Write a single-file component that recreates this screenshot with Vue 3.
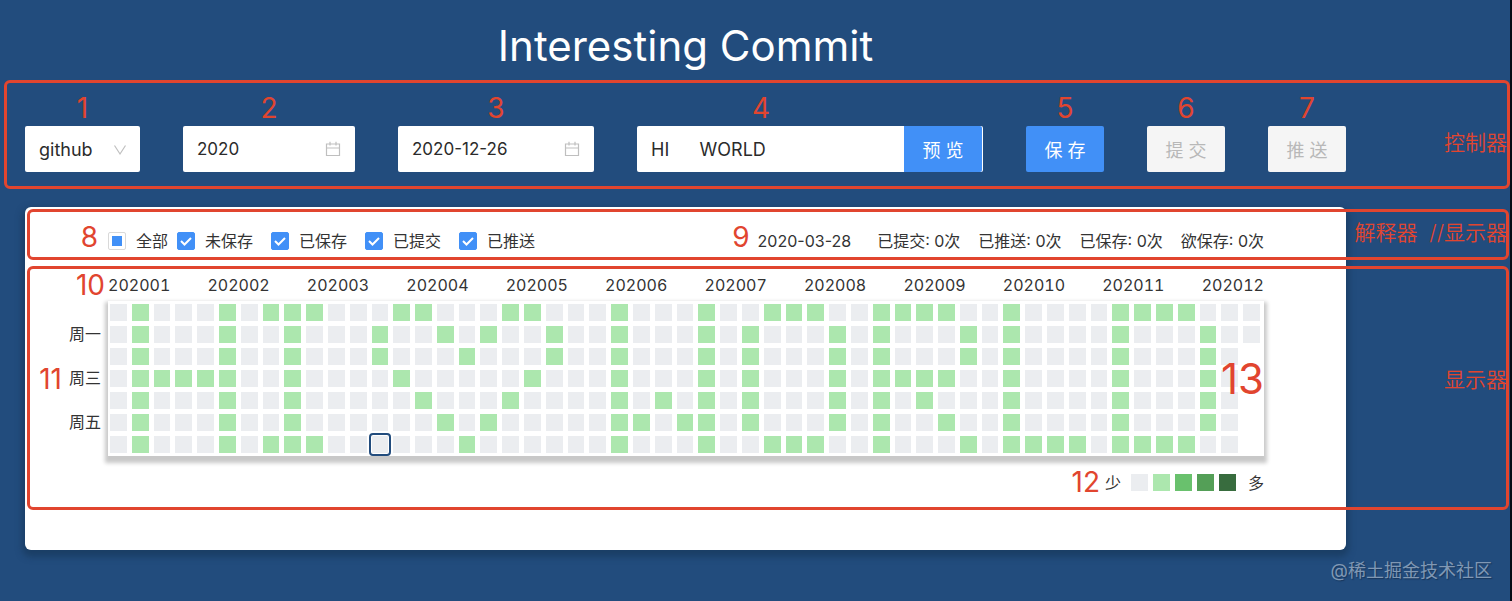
<script setup>
import { ref } from 'vue'

const platform = ref('github')
const year = ref('2020')
const date = ref('2020-12-26')
const text = ref('HI      WORLD')

const filters = ref([
  { id: 'unsaved', label: '未保存', on: true },
  { id: 'saved', label: '已保存', on: true },
  { id: 'committed', label: '已提交', on: true },
  { id: 'pushed', label: '已推送', on: true },
])

const stats = ['已提交: 0次', '已推送: 0次', '已保存: 0次', '欲保存: 0次']
const months = Array.from({ length: 12 }, (_, i) => String(202001 + i))
const weekdays = ['', '周一', '', '周三', '', '周五', '']

const filled = [
  [1, 5, 7, 8, 9, 13, 14, 18, 19, 23, 27, 30, 31, 32, 35, 36, 37, 38, 41, 46, 47, 48, 49],
  [1, 5, 8, 12, 15, 17, 20, 23, 27, 29, 33, 35, 39, 41, 46, 50],
  [1, 5, 8, 12, 16, 20, 23, 27, 29, 33, 35, 39, 41, 46, 50],
  [1, 2, 3, 4, 5, 8, 13, 19, 23, 27, 29, 33, 35, 36, 37, 38, 41, 46, 50],
  [1, 5, 8, 14, 18, 23, 25, 27, 29, 33, 35, 37, 41, 46, 50],
  [1, 5, 8, 15, 17, 23, 24, 26, 27, 29, 33, 35, 38, 41, 46, 50],
  [1, 5, 7, 8, 9, 16, 23, 27, 30, 31, 32, 35, 39, 41, 42, 43, 44, 46, 47, 48, 49],
]

const cells = filled.flatMap((cols, row) =>
  Array.from({ length: 53 }, (_, col) => ({
    key: `${row}-${col}`,
    on: cols.includes(col),
    empty: col === 52 && row > 1,
    selected: row === 6 && col === 12,
  })),
)
</script>

<template>
  <main class="page">
    <h1 class="title">Interesting Commit</h1>

    <section class="controls">
      <span class="frame"></span>
      <div class="control w-platform">
        <label class="mark" for="platform">1</label>
        <div class="box">
          <select id="platform" v-model="platform" class="field">
            <option>github</option>
            <option>gitlab</option>
          </select>
          <svg class="icon chevron" viewBox="0 0 14 14" fill="none" stroke="#bfbfbf" stroke-width="1.2">
            <path d="M1.5 2.5 7 11l5.5-8.5" />
          </svg>
        </div>
      </div>
      <div class="control w-year">
        <label class="mark" for="year">2</label>
        <div class="box">
          <input id="year" v-model="year" class="field date" type="text" />
          <svg class="icon" viewBox="0 0 16 16" fill="none" stroke="#bfbfbf" stroke-width="1.2">
            <path d="M1.5 3h13v11.5h-13zM1.5 7h13M5 .8v3.7M11 .8v3.7" />
          </svg>
        </div>
      </div>
      <div class="control w-date">
        <label class="mark" for="date">3</label>
        <div class="box">
          <input id="date" v-model="date" class="field date" type="text" />
          <svg class="icon" viewBox="0 0 16 16" fill="none" stroke="#bfbfbf" stroke-width="1.2">
            <path d="M1.5 3h13v11.5h-13zM1.5 7h13M5 .8v3.7M11 .8v3.7" />
          </svg>
        </div>
      </div>
      <div class="control w-text">
        <label class="mark" for="text">4</label>
        <div class="box">
          <input id="text" v-model="text" class="field" type="text" />
          <button class="btn primary" type="button">预 览</button>
        </div>
      </div>
      <div class="control">
        <span class="mark">5</span>
        <button class="btn primary" type="button">保 存</button>
      </div>
      <div class="control">
        <span class="mark">6</span>
        <button class="btn" type="button" disabled>提 交</button>
      </div>
      <div class="control">
        <span class="mark">7</span>
        <button class="btn" type="button" disabled>推 送</button>
      </div>
      <span class="note">控制器</span>
    </section>

    <div class="card">
      <section class="summary">
        <span class="frame"></span>
        <span class="mark gutter">8</span>
        <div class="filters">
          <label class="check first">
            <input type="checkbox" :indeterminate="true" />
            <svg class="tick" viewBox="0 0 18 18"><rect x="4" y="4" width="10" height="10" fill="#4190f7" /></svg>
            全部
          </label>
          <label v-for="f in filters" :key="f.id" class="check">
            <input v-model="f.on" type="checkbox" />
            <svg v-if="f.on" class="tick" viewBox="0 0 18 18" fill="none" stroke="#fff" stroke-width="2">
              <path d="M4 9l3.5 3.5L14 6" />
            </svg>
            {{ f.label }}
          </label>
        </div>
        <div class="stats">
          <span class="mark">9</span>
          <span class="day">2020-03-28</span>
          <span v-for="s in stats" :key="s">{{ s }}</span>
        </div>
        <span class="note">解释器&nbsp; //显示器</span>
      </section>

      <section class="calendar">
        <span class="frame"></span>
        <span class="mark gutter">10</span>
        <div class="months">
          <span v-for="m in months" :key="m">{{ m }}</span>
        </div>
        <div class="side">
          <span class="mark">11</span>
          <div class="weekdays">
            <span v-for="(d, i) in weekdays" :key="i">{{ d }}</span>
          </div>
        </div>
        <div class="board">
          <i
            v-for="c in cells"
            :key="c.key"
            class="cell"
            :class="{ on: c.on, empty: c.empty, selected: c.selected }"
          ></i>
          <span class="mark big">13</span>
        </div>
        <div class="legend">
          <span class="mark">12</span>
          <span class="less">少</span>
          <i class="cell l0"></i>
          <i class="cell l1"></i>
          <i class="cell l2"></i>
          <i class="cell l3"></i>
          <i class="cell l4"></i>
          <span class="more">多</span>
        </div>
        <span class="note">显示器</span>
      </section>
    </div>

    <footer class="credit">@稀土掘金技术社区</footer>
  </main>
</template>

<style>
body {
  margin: 0;
  background: #224c7d;
}
</style>

<style scoped>
.page {
  --red: #e1452f;
  --blue: #4190f7;
  position: relative;
  box-sizing: border-box;
  min-height: 100vh;
  padding: 0 164px 0 25px;
  border-right: 2px solid #060d16;
  background: #224c7d;
  color: #333;
  font-family: Inter, "Noto Sans CJK SC", sans-serif;
  font-size: 16px;
  overflow: hidden;
}
.title {
  margin: 0;
  padding: 12px 0 0;
  color: #fff;
  font-size: 42px;
  font-weight: 400;
  line-height: 68px;
  text-align: center;
}
.frame {
  position: absolute;
  inset: 0 -163px 0 2px;
  border: 3px solid var(--red);
  border-radius: 6px;
  pointer-events: none;
}
.mark {
  color: var(--red);
  font-size: 28px;
  font-weight: 400;
  line-height: 32px;
}
.note {
  position: absolute;
  right: -161px;
  color: var(--red);
  font-size: 21px;
  font-weight: 350;
  line-height: 32px;
  white-space: nowrap;
}
.controls {
  position: relative;
  display: flex;
  gap: 43px;
  padding: 12px 0 17px;
  margin-bottom: 18px;
}
.controls .frame {
  left: -21px;
  right: -164px;
}
.controls .note {
  top: 47px;
}
.control {
  display: flex;
  flex: none;
  flex-direction: column;
  align-items: center;
  gap: 2px;
}
.w-platform { width: 115px; }
.w-year { width: 172px; }
.w-date { width: 196px; }
.w-text {
  flex: 1;
  min-width: 0;
}
.w-text .mark { margin-right: 98px; }
.box {
  position: relative;
  display: flex;
  box-sizing: border-box;
  width: 100%;
  height: 46px;
  border-radius: 2px;
  background: #fff;
}
.w-text .box {
  padding-right: 1px;
}
.w-text .btn {
  border-radius: 0 2px 2px 0;
}
.field {
  flex: 1;
  min-width: 0;
  padding: 0 14px;
  border: 0;
  outline: 0;
  appearance: none;
  background: transparent;
  color: #2b2b2b;
  font: 18px Inter, "Noto Sans CJK SC", sans-serif;
}
.field.date {
  font-size: 17px;
}
.icon {
  position: absolute;
  top: 15px;
  right: 14px;
  width: 16px;
  height: 16px;
  pointer-events: none;
}
.icon.chevron {
  top: 17px;
  right: 13px;
  width: 14px;
  height: 14px;
}
.btn {
  width: 78px;
  height: 46px;
  padding: 0;
  border: 0;
  border-radius: 2px;
  background: #f5f5f5;
  color: #b8b8b8;
  font: 18px Inter, "Noto Sans CJK SC", sans-serif;
}
.btn.primary {
  background: var(--blue);
  color: #fff;
}
.card {
  padding: 2px 0 40px;
  border-radius: 6px;
  background: #fff;
  box-shadow: 0 4px 6px 3px rgba(20, 50, 80, 0.5);
}
.gutter {
  text-align: right;
}
.summary {
  position: relative;
  display: flex;
  align-items: center;
  padding: 16px 82px 3px 0;
  margin-bottom: 6px;
  line-height: 32px;
}
.summary .gutter {
  width: 73px;
  margin: -8px 10px 0 0;
}
.summary .note {
  top: 8px;
}
.filters {
  display: flex;
  gap: 18px;
}
.check {
  position: relative;
  display: flex;
  align-items: center;
  gap: 10px;
}
.check.first {
  margin-right: -9px;
}
.check input {
  width: 18px;
  height: 18px;
  margin: 0;
  border: 1px solid #d9d9d9;
  border-radius: 2px;
  appearance: none;
  background: #fff;
}
.check input:checked {
  border-color: var(--blue);
  background: var(--blue);
}
.tick {
  position: absolute;
  left: 0;
  width: 18px;
  height: 18px;
  pointer-events: none;
}
.stats {
  display: flex;
  align-items: center;
  gap: 18px;
  margin-left: auto;
}
.stats .mark {
  margin: -8px -10px 0 0;
}
.day {
  margin-right: 8px;
}
.calendar {
  position: relative;
  display: grid;
  grid-template-columns: 83px 1fr 82px;
  padding: 3px 0 12px;
}
.calendar .gutter {
  padding-right: 3px;
}
.calendar .note {
  top: 98px;
}
.months {
  display: flex;
  justify-content: space-between;
  line-height: 32px;
  font-variant-numeric: tabular-nums;
}
.side {
  grid-column: 1;
  display: flex;
  align-items: center;
  justify-content: flex-end;
  gap: 7px;
  padding-right: 7px;
}
.weekdays {
  display: grid;
  grid-template-rows: repeat(7, 17px);
  gap: 5px;
  line-height: 17px;
}
.board {
  position: relative;
  display: grid;
  grid-template-columns: repeat(53, 1fr);
  grid-template-rows: repeat(7, 17px);
  gap: 5px;
  padding: 3px 4px 3px 2px;
  background: #fff;
  box-shadow: 0 4px 4px 3px #c8c8c8;
}
.cell {
  background: #ebedf0;
}
.cell.on { background: #ace7ae; }
.cell.empty { background: transparent; }
.cell.selected {
  outline: 2px solid #224c7d;
  outline-offset: 1px;
  border-radius: 1px;
}
.big {
  position: absolute;
  top: 54px;
  right: 0;
  font-size: 42px;
  line-height: 48px;
}
.legend {
  grid-column: 2;
  display: flex;
  align-items: center;
  justify-content: flex-end;
  gap: 5px;
  margin-top: 10px;
}
.legend .cell {
  width: 17px;
  height: 17px;
}
.less { margin-right: 5px; }
.more { margin-left: 7px; }
.l1 { background: #ace7ae; }
.l2 { background: #69c16d; }
.l3 { background: #549f57; }
.l4 { background: #386c3e; }
.credit {
  margin: 8px -146px 0 0;
  color: #8098b4;
  font-size: 18px;
  line-height: 26px;
  text-align: right;
  text-shadow: 1px 1px 1px #17365c;
}
</style>
